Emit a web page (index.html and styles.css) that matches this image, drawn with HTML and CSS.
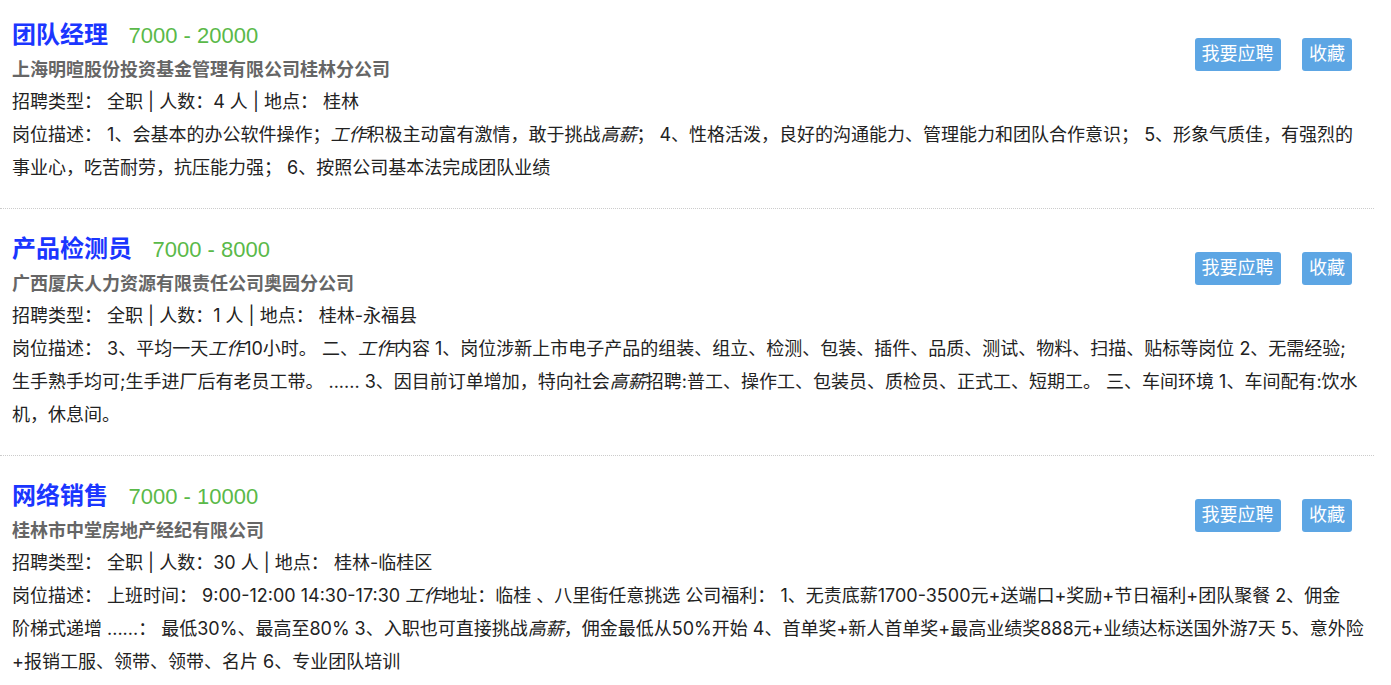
FILE: index.html
```html
<!DOCTYPE html>
<html lang="zh-CN">

<head>
    <meta charset="UTF-8">
    <meta name="viewport" content="width=device-width, initial-scale=1.0">
    <title>职位列表</title>
    <link rel="stylesheet" href="styles.css">
</head>

<body>
    <div class="job-list">
        <div class="job-item">
            <div class="job-btns">
                <a href="#" class="btn">我要应聘</a>
                <a href="#" class="btn">收藏</a>
            </div>
            <div class="job-title">
                <a href="#" class="job-name">团队经理</a>
                <span class="job-salary">7000 - 20000</span>
            </div>
            <div class="job-company">上海明暄股份投资基金管理有限公司桂林分公司</div>
            <div class="job-info">招聘类型： 全职 | 人数：4 人 | 地点： 桂林</div>
            <div class="job-desc">岗位描述： 1、会基本的办公软件操作；<em>工作</em>积极主动富有激情，敢于挑战<em>高薪</em>； 4、性格活泼，良好的沟通能力、管理能力和团队合作意识； 5、形象气质佳，有强烈的事业心，吃苦耐劳，抗压能力强； 6、按照公司基本法完成团队业绩</div>
        </div>
        <div class="job-item">
            <div class="job-btns">
                <a href="#" class="btn">我要应聘</a>
                <a href="#" class="btn">收藏</a>
            </div>
            <div class="job-title">
                <a href="#" class="job-name">产品检测员</a>
                <span class="job-salary">7000 - 8000</span>
            </div>
            <div class="job-company">广西厦庆人力资源有限责任公司奥园分公司</div>
            <div class="job-info">招聘类型： 全职 | 人数：1 人 | 地点： 桂林-永福县</div>
            <div class="job-desc">岗位描述： 3、平均一天<em>工作</em>10小时。 二、<em>工作</em>内容 1、岗位涉新上市电子产品的组装、组立、检测、包装、插件、品质、测试、物料、扫描、贴标等岗位 2、无需经验;<span class="nowrap">生手</span>熟手均可;生手进厂后有老员工带。 ...... 3、因目前订单增加，特向社会<em>高薪</em>招聘:普工、操作工、包装员、质检员、正式工、短期工。 三、车间环境 1、车间配有:饮水机，休息间。</div>
        </div>
        <div class="job-item">
            <div class="job-btns">
                <a href="#" class="btn">我要应聘</a>
                <a href="#" class="btn">收藏</a>
            </div>
            <div class="job-title">
                <a href="#" class="job-name">网络销售</a>
                <span class="job-salary">7000 - 10000</span>
            </div>
            <div class="job-company">桂林市中堂房地产经纪有限公司</div>
            <div class="job-info">招聘类型： 全职 | 人数：30 人 | 地点： 桂林-临桂区</div>
            <div class="job-desc">岗位描述： 上班时间： 9:00-12:00 14:30-17:30 <em>工作</em>地址：临桂 、八里街任意挑选 公司福利： 1、无责底薪1700-3500元+送端口+奖励+节日福利+团队聚餐 2、佣金<span class="nowrap">阶梯式递增</span> ......： 最低30%、最高至80% 3、入职也可直接挑战<em>高薪</em>，佣金最低从50%开始 4、首单奖+新人首单奖+最高业绩奖888元+业绩达标送国外游7天 5、意外险+报销工服、领带、领带、名片 6、专业团队培训</div>
        </div>
    </div>
</body>

</html>
```

FILE: styles.css
```css
* {
    margin: 0;
    padding: 0;
}

body {
    font-family: "Liberation Sans", "Noto Sans CJK SC", sans-serif;
    color: #333;
    background: #fff;
}

a {
    text-decoration: none;
}

.job-list {
    width: 1374px;
}

.job-item {
    padding: 20px 10px 24px 12px;
    border-bottom: 1px dotted #ccc;
}

.job-item:first-child {
    padding-top: 15px;
}

.job-btns {
    float: right;
    margin-top: 23px;
    margin-right: 12px;
}

.btn {
    display: inline-block;
    height: 33px;
    line-height: 33px;
    padding: 0 7px;
    margin-left: 17px;
    font-size: 18px;
    color: #fff;
    background: #5da6e4;
    border-radius: 3px;
}

.job-title {
    height: 40px;
    line-height: 40px;
}

.job-name {
    font-size: 24px;
    font-weight: bold;
    color: #1b36ff;
}

.job-salary {
    margin-left: 16px;
    font-size: 22px;
    color: #5ab949;
}

.job-company {
    height: 30px;
    line-height: 30px;
    font-size: 18px;
    font-weight: bold;
    color: #666;
}

.job-info,
.job-desc {
    font-family: Inter, "Noto Sans CJK SC", sans-serif;
    font-size: 18px;
    line-height: 33px;
    color: #222;
}

.nowrap {
    white-space: nowrap;
}
```
